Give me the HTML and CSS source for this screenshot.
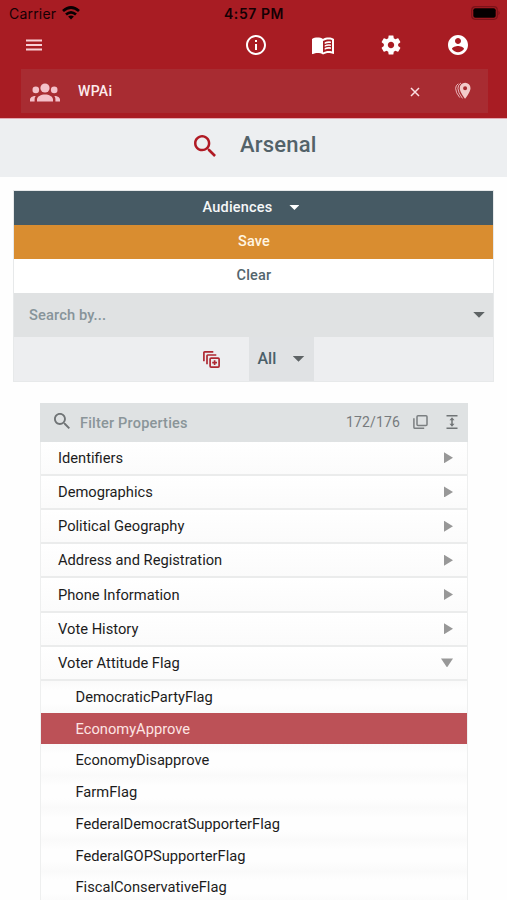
FILE: index.html
```html
<!DOCTYPE html>
<html lang="en">
<head>
<meta charset="utf-8">
<title>Arsenal</title>
<link rel="stylesheet" href="styles.css">
</head>
<body>
<header class="app-header">
  <div class="status">
    <span class="carrier">Carrier</span>
    <svg class="wifi" viewBox="0 0 18 14"><g fill="none" stroke="#080002" stroke-width="2.7"><path d="M1 5.1Q9-2.1 17 5.1"/><path d="M4 8.6Q9 4.2 14 8.6"/></g><path fill="#080002" d="M6.1 10.6Q9 8.4 11.9 10.6L9 13.5z"/></svg>
    <span class="time">4:57 PM</span>
    <svg class="battery" viewBox="0 0 30 14"><rect x=".7" y=".7" width="25.6" height="12.6" rx="3.5" fill="none" stroke="#7c1219" stroke-width="1.2"/><rect x="2.3" y="2.3" width="22.4" height="9.4" rx="2" fill="#050001"/><path d="M27.5 4.8q2.4 2.2 0 4.4z" fill="#7c1219"/></svg>
  </div>
  <nav class="toolbar">
    <svg class="menu" viewBox="0 0 16 12"><path d="M0 1.500h16M0 6h16M0 10.500h16" stroke="#f9cfd6" stroke-width="2.200"/></svg>
    <svg class="tool" viewBox="0 0 24 24"><path d="M11 7h2v2h-2zm0 4h2v6h-2zm1-9C6.48 2 2 6.48 2 12s4.48 10 10 10 10-4.48 10-10S17.52 2 12 2zm0 18c-4.41 0-8-3.59-8-8s3.59-8 8-8 8 3.59 8 8-3.59 8-8 8z"/></svg>
    <svg class="tool" viewBox="0 0 24 24"><path d="M21 5c-1.11-.35-2.33-.5-3.5-.5-1.95 0-4.05.4-5.5 1.5-1.45-1.1-3.55-1.5-5.5-1.5S2.45 4.9 1 6v14.65c0 .25.25.5.5.5.1 0 .15-.05.25-.05C3.1 20.45 5.05 20 6.5 20c1.95 0 4.05.4 5.5 1.5 1.35-.85 3.8-1.5 5.5-1.5 1.65 0 3.35.3 4.75 1.05.1.05.15.05.25.05.25 0 .5-.25.5-.5V6c-.6-.45-1.25-.75-2-1zm0 13.500c-1.100-.35-2.300-.5-3.500-.5-1.700 0-4.150.65-5.500 1.500V8c1.350-.85 3.800-1.500 5.500-1.500 1.200 0 2.400.15 3.500.5v11.500z"/><path d="M13.700 9.300q3-1.400 6.200-.8v1.600q-3.200-.6-6.200.8zm0 2.900q3-1.400 6.200-.8V13q-3.200-.6-6.200.8zm0 2.900q3-1.400 6.200-.8v1.600q-3.200-.6-6.200.8z"/></svg>
    <svg class="tool gear" viewBox="0 0 24 24"><path d="M19.140 12.940c.04-.3.06-.61.06-.94 0-.32-.02-.64-.07-.94l2.030-1.580c.18-.14.23-.41.12-.61l-1.920-3.320c-.12-.22-.37-.29-.59-.22l-2.390.96c-.5-.38-1.030-.7-1.620-.94l-.36-2.540c-.04-.24-.24-.41-.48-.41h-3.840c-.24 0-.43.17-.47.41l-.36 2.540c-.59.24-1.130.57-1.620.94l-2.390-.96c-.22-.08-.47 0-.59.22L2.740 8.870c-.12.21-.08.47.12.61l2.030 1.580c-.05.3-.09.63-.09.94s.02.64.07.94l-2.030 1.580c-.18.14-.23.41-.12.61l1.920 3.320c.12.22.37.29.59.22l2.390-.96c.5.38 1.030.7 1.620.94l.36 2.540c.05.24.24.41.48.41h3.840c.24 0 .44-.17.47-.41l.36-2.540c.59-.24 1.130-.56 1.620-.94l2.390.96c.22.08.47 0 .59-.22l1.920-3.320c.12-.22.07-.47-.12-.61l-2.010-1.580zM12 15.200c-1.760 0-3.200-1.440-3.200-3.200s1.440-3.200 3.200-3.200 3.200 1.440 3.200 3.200-1.440 3.200-3.200 3.200z"/></svg>
    <svg class="tool" viewBox="0 0 24 24"><path d="M12 2C6.480 2 2 6.480 2 12s4.480 10 10 10 10-4.480 10-10S17.520 2 12 2zm0 3c1.660 0 3 1.340 3 3s-1.340 3-3 3-3-1.340-3-3 1.340-3 3-3zm0 14.200c-2.500 0-4.710-1.280-6-3.220.03-1.990 4-3.080 6-3.080 1.990 0 5.970 1.090 6 3.080-1.290 1.940-3.500 3.220-6 3.220z"/></svg>
  </nav>
  <div class="account">
    <svg class="group" viewBox="0 0 30 19"><circle cx="15" cy="5" r="4.600"/><circle cx="5.800" cy="6.900" r="3.300"/><circle cx="24.200" cy="6.900" r="3.300"/><path d="M7 18.500v-2c0-3 4-5 8-5s8 2 8 5v2zM0 18.500v-1.700c0-2.300 2.300-4 5.700-3.900-.8 1-1.100 2-1.100 3.200v2.400zM30 18.500v-1.700c0-2.300-2.300-4-5.700-3.900.8 1 1.100 2 1.100 3.200v2.400z"/></svg>
    <span class="account-name">WPAi</span>
    <svg class="close" viewBox="0 0 10 10"><path d="M1 1l8 8M9 1L1 9" stroke="#fbdfe2" stroke-width="1.500"/></svg>
    <svg class="pins" viewBox="0 0 16 18"><path fill-rule="evenodd" d="M10.100.7a5.400 5.600 0 0 0-5.400 5.600c0 4 5.400 10.500 5.400 10.500s5.400-6.500 5.400-10.500A5.400 5.600 0 0 0 10.100.7zm0 3.600a2 2 0 1 1 0 4 2 2 0 0 1 0-4z"/><path d="M6 .9Q2.900 2.800 2.900 6.300q0 4.200 4.600 10.100M3.300 1.700Q.6 3.500.6 6.400q0 4.100 4.200 9.200" fill="none" stroke="#f0c4c8" stroke-width=".9"/></svg>
  </div>
</header>
<div class="title-bar">
  <svg class="title-icon" viewBox="3 3 17.500 17.500"><path fill="#b01a24" d="M15.500 14h-.79l-.28-.27C15.410 12.590 16 11.110 16 9.500 16 5.910 13.090 3 9.500 3S3 5.910 3 9.500 5.910 16 9.500 16c1.610 0 3.090-.59 4.230-1.570l.27.28v.79l5 4.990L20.490 19l-4.990-5zm-6 0C7.010 14 5 11.990 5 9.500S7.010 5 9.500 5 14 7.010 14 9.500 11.990 14 9.500 14z"/></svg>
  <h1>Arsenal</h1>
</div>
<main>
  <section class="actions">
    <div class="action audiences"><span>Audiences</span><i class="caret"></i></div>
    <div class="action save">Save</div>
    <div class="action clear">Clear</div>
    <div class="search-by"><span>Search by...</span><i class="caret"></i></div>
    <div class="match">
      <svg class="add-set" viewBox="0 0 17 17"><g fill="none" stroke="#ae2832" stroke-width="1.700"><path d="M.9 10.300V1.700q0-.8.800-.8h8.600M4 13.300V4.800Q4 4 4.800 4h8.500"/><rect x="7.100" y="7.100" width="9" height="9" rx="1"/><path d="M11.600 9.200v4.800M9.200 11.600H14"/></g></svg>
      <div class="match-mode"><span>All</span><i class="caret"></i></div>
    </div>
  </section>
  <section class="properties">
    <div class="filter">
      <svg class="filter-icon" viewBox="3 3 17.500 17.500"><path fill="#707476" d="M15.500 14h-.79l-.28-.27C15.410 12.590 16 11.110 16 9.500 16 5.910 13.090 3 9.500 3S3 5.910 3 9.500 5.910 16 9.500 16c1.610 0 3.090-.59 4.230-1.570l.27.28v.79l5 4.990L20.490 19l-4.990-5zm-6 0C7.010 14 5 11.990 5 9.500S7.010 5 9.500 5 14 7.010 14 9.500 11.990 14 9.500 14z"/></svg>
      <span class="filter-label">Filter Properties</span>
      <span class="count">172/176</span>
      <svg class="copy" viewBox="0 0 15 14"><g fill="none" stroke="#7b7f81" stroke-width="1.500"><rect x="4" y=".8" width="10" height="9.600" rx="1"/><path d="M.9 3.300v9q0 1 1 1h9.300"/></g></svg>
      <svg class="expand" viewBox="0 0 12 14"><path d="M.5.8h11M.5 13.200h11M6 4v6" stroke="#707476" stroke-width="1.500"/><path d="M6 2.300l2.500 2.900h-5zM6 11.700l2.500-2.900h-5z" fill="#707476"/></svg>
    </div>
    <div class="group-row"><span>Identifiers</span><i class="arrow"></i></div>
    <div class="group-row"><span>Demographics</span><i class="arrow"></i></div>
    <div class="group-row"><span>Political Geography</span><i class="arrow"></i></div>
    <div class="group-row"><span>Address and Registration</span><i class="arrow"></i></div>
    <div class="group-row"><span>Phone Information</span><i class="arrow"></i></div>
    <div class="group-row"><span>Vote History</span><i class="arrow"></i></div>
    <div class="group-row"><span>Voter Attitude Flag</span><i class="arrow open"></i></div>
    <div class="flag">DemocraticPartyFlag</div>
    <div class="flag selected">EconomyApprove</div>
    <div class="flag">EconomyDisapprove</div>
    <div class="flag">FarmFlag</div>
    <div class="flag">FederalDemocratSupporterFlag</div>
    <div class="flag">FederalGOPSupporterFlag</div>
    <div class="flag">FiscalConservativeFlag</div>
  </section>
</main>
</body>
</html>
```
FILE: styles.css
```css
* { box-sizing: border-box; }
body {
  margin: 0;
  height: 900px;
  overflow: hidden;
  background: #fefefe;
  font-family: Roboto, "Liberation Sans", sans-serif;
  font-size: 14.700px;
  color: #1c1c1c;
}
svg { display: block; flex: none; }
.app-header {
  height: 119px;
  background: #a81c23;
  border-bottom: 1px solid #e3a9b2;
}
.status {
  display: grid;
  grid-template-columns: 53px 162px 1fr 30px;
  align-items: center;
  height: 27px;
  padding: 0 6px 0 9px;
  color: #150003;
  font-family: Inter, sans-serif;
  font-size: 14px;
}
.carrier { letter-spacing: .2px; }
.wifi { width: 18px; height: 14px; margin-top: -1px; }
.time { font-weight: 600; letter-spacing: .55px; white-space: nowrap; }
.battery { width: 30px; height: 14px; margin-top: -1px; }
.toolbar {
  display: grid;
  grid-template-columns: 196px repeat(4, 67.400px);
  align-items: center;
  height: 35px;
  padding-left: 26px;
}
.menu { width: 16px; height: 12px; }
.tool { width: 24px; height: 24px; fill: #fff; justify-self: center; }
.gear { margin-left: 1px; }
.account {
  display: flex;
  align-items: center;
  height: 44px;
  margin: 7px 19px 0 21px;
  padding: 0 17px 0 9px;
  background: #a82c32;
}
.group { width: 30px; height: 19px; margin-top: 2px; fill: #f4c0c9; }
.account-name { margin-left: 18px; font-size: 14px; font-weight: 500; letter-spacing: .3px; color: #fdebed; flex: 1; }
.close { width: 10px; height: 10px; margin: 2px 35px 0 0; }
.pins { width: 16px; height: 18px; fill: #f2cbca; }
.title-bar {
  display: flex;
  align-items: center;
  height: 57.500px;
  padding: 0 0 6px 194px;
  background: #edeff1;
}
.title-icon { width: 22px; height: 22px; margin-top: 2px; }
h1 { margin: 0 0 0 24px; font-size: 22px; font-weight: 500; letter-spacing: .2px; color: #536269; }
main { padding: 13px 13px 0; }
.actions { border: 1px solid #e7e9ea; font-weight: 500; }
.action {
  display: flex;
  align-items: center;
  justify-content: center;
  height: 34.200px;
  padding-left: 1px;
  font-size: 14.500px;
  letter-spacing: .2px;
}
.audiences { background: #465a64; color: #f5f7f8; gap: 17px; padding-right: 6px; }
.save { background: #d98d30; color: #fff5e2; }
.clear { background: #fff; color: #53656d; }
.caret { width: 12px; height: 6px; background: #5e6365; clip-path: polygon(0 0, 100% 0, 50% 100%); }
.audiences .caret { width: 10px; height: 5px; background: #fff; }
.search-by {
  display: flex;
  align-items: center;
  justify-content: space-between;
  height: 43.600px;
  padding: 0 8px 0 15px;
  background: #e0e2e3;
  color: #87949a;
  letter-spacing: .1px;
}
.match {
  display: grid;
  grid-template-columns: 234.500px 65px 1fr;
  height: 44px;
  background: #edeef0;
}
.add-set { width: 17px; height: 17px; margin: 14px 0 0 189px; }
.match-mode {
  display: flex;
  align-items: center;
  justify-content: space-between;
  padding: 0 9px;
  background: #e0e2e4;
  color: #4b6069;
  font-size: 16px;
}
.properties {
  margin: 21px 26px 0 27px;
  border: 1px solid #eeefef;
  border-top: 0;
  background: #fefefe;
}
.filter {
  display: flex;
  align-items: center;
  height: 39px;
  margin: 0 -1px;
  padding: 0 10px 0 14px;
  background: #dfe2e3;
}
.filter-icon { width: 16px; height: 16px; margin-top: -2px; }
.filter-label { flex: 1; margin-left: 10px; padding-top: 2px; font-size: 14.500px; font-weight: 500; letter-spacing: .2px; color: #8a9599; }
.count { font-size: 14px; letter-spacing: .15px; color: #777b7d; }
.copy { width: 15px; height: 14px; margin-left: 13px; }
.expand { width: 12px; height: 14px; margin-left: 18px; }
.group-row {
  display: flex;
  align-items: center;
  justify-content: space-between;
  height: 34.200px;
  padding: 0 14px 0 17px;
  border-bottom: 2px solid #ebecec;
  background: linear-gradient(#fff, #fbfbfb);
}
.arrow { width: 9px; height: 11px; background: #989898; clip-path: polygon(0 0, 100% 50%, 0 100%); }
.arrow.open { width: 12px; height: 9px; clip-path: polygon(0 0, 100% 0, 50% 100%); }
.flag {
  height: 31.750px;
  padding-left: 34.500px;
  line-height: 32px;
  background: linear-gradient(#fafafa, #fefefe 30%, #fefefe 70%, #fafafa);
}
.selected { background: #bc5157; color: #fde4e3; }
```
